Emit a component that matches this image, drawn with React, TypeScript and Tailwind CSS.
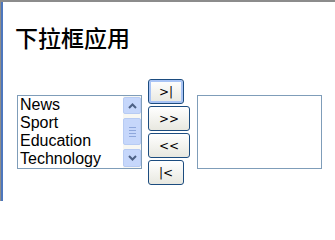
import React from 'react';

const items = ['News', 'Sport', 'Education', 'Technology'];

const Chevron: React.FC<{ up?: boolean }> = ({ up }) => (
  <svg width="9" height="6" viewBox="0 0 9 6" aria-hidden="true">
    <path
      d={up ? 'M1 5 L4.5 1.5 L8 5' : 'M1 1 L4.5 4.5 L8 1'}
      fill="none"
      stroke="#4d6185"
      strokeWidth="2"
    />
  </svg>
);

// XP style list scrollbar
const ScrollBar: React.FC = () => (
  <div className="flex h-full w-[18px] flex-col bg-[#f7f7f3] py-px">
    <div className="flex h-[17px] items-center justify-center rounded-[2px] border border-[#b7cbf3] bg-[#c6d7fb]">
      <Chevron up />
    </div>
    <div className="mt-[4px] flex h-[27px] flex-col items-center justify-center gap-[2px] rounded-[2px] border border-[#b7cbf3] bg-[#c6d7fb]">
      <span className="h-px w-[7px] bg-[#8ea7dc]" />
      <span className="h-px w-[7px] bg-[#8ea7dc]" />
      <span className="h-px w-[7px] bg-[#8ea7dc]" />
      <span className="h-px w-[7px] bg-[#8ea7dc]" />
    </div>
    <div className="mt-auto flex h-[18px] items-center justify-center rounded-[2px] border border-[#b7cbf3] bg-[#c6d7fb]">
      <Chevron />
    </div>
  </div>
);

const XpButton: React.FC<{ label: string; wide?: boolean; focused?: boolean }> = ({
  label,
  wide,
  focused,
}) => (
  <button
    type="button"
    className={
      (wide ? 'w-[42px] h-[25px] ' : 'w-[36px] h-[25px] ') +
      (focused ? 'shadow-[inset_0_0_0_2px_#a9c4f5] ' : '') +
      'flex items-center justify-center rounded-[3px] border border-[#1c4c7f] bg-gradient-to-b from-[#ffffff] to-[#e8e8e0] text-[12px] leading-none text-black'
    }
    style={{ fontFamily: 'Tahoma, "DejaVu Sans", sans-serif' }}
  >
    {label}
  </button>
);

export default function App() {
  return (
    <div className="h-[201px] w-[335px] overflow-hidden border-l border-t-2 border-l-[#8c8c8c] border-t-[#8c8c8c] bg-white">
      <div className="h-full border-l-2 border-l-[#4d77bd] pl-[12px] pt-[21px]">
        <h1
          className="text-[23px] font-medium leading-[28px] text-black"
          style={{ fontFamily: '"Noto Sans CJK SC", sans-serif' }}
        >
          下拉框应用
        </h1>

        <div className="mt-[28px] flex items-center">
          {/* source list */}
          <div className="ml-[2px] flex h-[74px] w-[125px] border border-[#7f9db9] bg-white">
            <ul
              className="flex-1 pl-[2px] text-[16px] leading-[18px] text-black"
              style={{ fontFamily: '"Liberation Sans", Arial, sans-serif' }}
            >
              {items.map((it) => (
                <li key={it}>{it}</li>
              ))}
            </ul>
            <ScrollBar />
          </div>

          {/* move buttons */}
          <div className="ml-[6px] flex flex-col gap-[2px]">
            <XpButton label=">|" focused />
            <XpButton label=">>" wide />
            <XpButton label="<<" wide />
            <XpButton label="|<" />
          </div>

          {/* target list */}
          <div className="ml-[7px] h-[74px] w-[125px] border border-[#7f9db9] bg-white" />
        </div>
      </div>
    </div>
  );
}
